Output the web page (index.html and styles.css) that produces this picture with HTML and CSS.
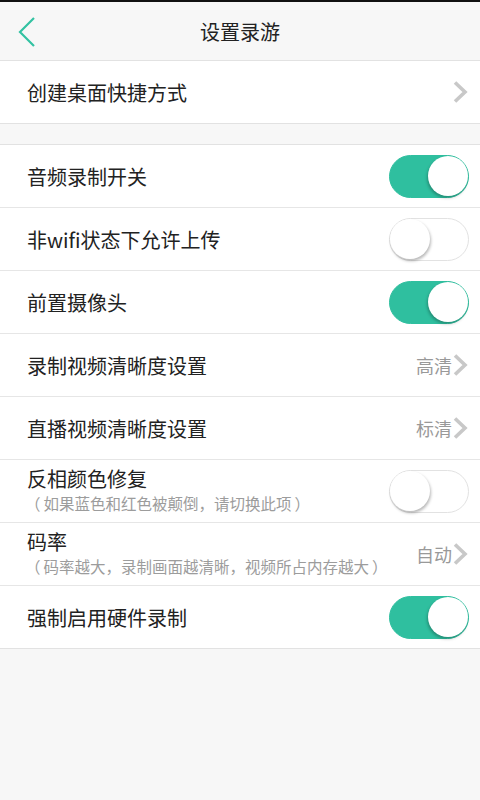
FILE: index.html
```html
<!DOCTYPE html>
<html lang="zh">
<head>
<meta charset="utf-8">
<link rel="stylesheet" href="styles.css">
</head>
<body>
<div class="status"></div>
<header class="topbar">
  <svg class="back" width="20" height="32" viewBox="0 0 20 32"><path d="M17 2 L3 16 L17 30" fill="none" stroke="#33c2a2" stroke-width="2.2"/></svg>
  <div class="title">设置录游</div>
</header>
<div class="group">
  <div class="row"><div class="label">创建桌面快捷方式</div><div class="right"><svg class="chev" width="17" height="24" viewBox="0 0 17 24"><path d="M3 2.5 L13 12 L3 21.5" fill="none" stroke="#c8c8c8" stroke-width="3.6"/></svg></div></div>
</div>
<div class="group second">
  <div class="row"><div class="label">音频录制开关</div><div class="toggle on"><span class="knob"></span></div></div>
  <div class="row"><div class="label">非wifi状态下允许上传</div><div class="toggle"><span class="knob"></span></div></div>
  <div class="row"><div class="label">前置摄像头</div><div class="toggle on"><span class="knob"></span></div></div>
  <div class="row"><div class="label">录制视频清晰度设置</div><div class="right"><span class="value">高清</span><svg class="chev" width="17" height="24" viewBox="0 0 17 24"><path d="M3 2.5 L13 12 L3 21.5" fill="none" stroke="#c8c8c8" stroke-width="3.6"/></svg></div></div>
  <div class="row"><div class="label">直播视频清晰度设置</div><div class="right"><span class="value">标清</span><svg class="chev" width="17" height="24" viewBox="0 0 17 24"><path d="M3 2.5 L13 12 L3 21.5" fill="none" stroke="#c8c8c8" stroke-width="3.6"/></svg></div></div>
  <div class="row"><div class="text"><div class="label">反相颜色修复</div><div class="sub"><span class="paren open">（</span>如果蓝色和红色被颠倒，请切换此项<span class="paren close">）</span></div></div><div class="toggle"><span class="knob"></span></div></div>
  <div class="row"><div class="text"><div class="label">码率</div><div class="sub"><span class="paren open">（</span>码率越大，录制画面越清晰，视频所占内存越大<span class="paren close">）</span></div></div><div class="right"><span class="value">自动</span><svg class="chev" width="17" height="24" viewBox="0 0 17 24"><path d="M3 2.5 L13 12 L3 21.5" fill="none" stroke="#c8c8c8" stroke-width="3.6"/></svg></div></div>
  <div class="row"><div class="label">强制启用硬件录制</div><div class="toggle on"><span class="knob"></span></div></div>
</div>
</body>
</html>
```
FILE: styles.css
```css
html, body { margin: 0; padding: 0; }
body {
  width: 480px; height: 800px; overflow: hidden;
  background: #f7f7f7;
  font-family: "Noto Sans CJK SC", "Noto Sans", sans-serif;
  color: #222;
}
.status { height: 2px; background: #111; }
.topbar {
  height: 58px; background: #f7f7f7; position: relative;
  display: flex; align-items: center; justify-content: center;
  border-bottom: 1px solid #e2e2e2;
}
.back { position: absolute; left: 17px; top: 14px; }
.title { font-size: 20px; color: #222; }
.group { background: #fff; border-bottom: 1px solid #e2e2e2; }
.group.second { margin-top: 20px; border-top: 1px solid #e2e2e2; }
.row {
  height: 62px; display: flex; align-items: center; justify-content: space-between;
  padding: 0 11px 0 27px; box-sizing: border-box;
}
.row + .row { border-top: 1px solid #e6e6e6; height: 63px; }
.label { font-size: 20px; line-height: 25px; }
.text { display: flex; flex-direction: column; margin-top: -4px; }
.sub { font-size: 15.5px; color: #9c9c9c; line-height: 20px; margin-left: -2px; margin-top: 2px; }
.paren.open { margin-right: 3px; }
.paren.close { margin-left: 3px; }
.right { display: flex; align-items: center; }
.value { font-size: 18px; color: #999; }
.chev { display: block; margin-right: 0; }
.toggle {
  width: 80px; height: 43px; border-radius: 22px; box-sizing: border-box;
  border: 1.5px solid #e2e2e2; background: #fff; position: relative;
}
.toggle.on { background: #2fbf9f; border-color: #2fbf9f; }
.knob {
  position: absolute; top: 0px; left: 0px; width: 40px; height: 40px; border-radius: 50%;
  background: #fff; box-shadow: 1px 2px 3px rgba(0,0,0,0.28);
}
.toggle.on .knob { left: auto; right: 0; box-shadow: -1px 2px 3px rgba(0,0,0,0.25); }
```
